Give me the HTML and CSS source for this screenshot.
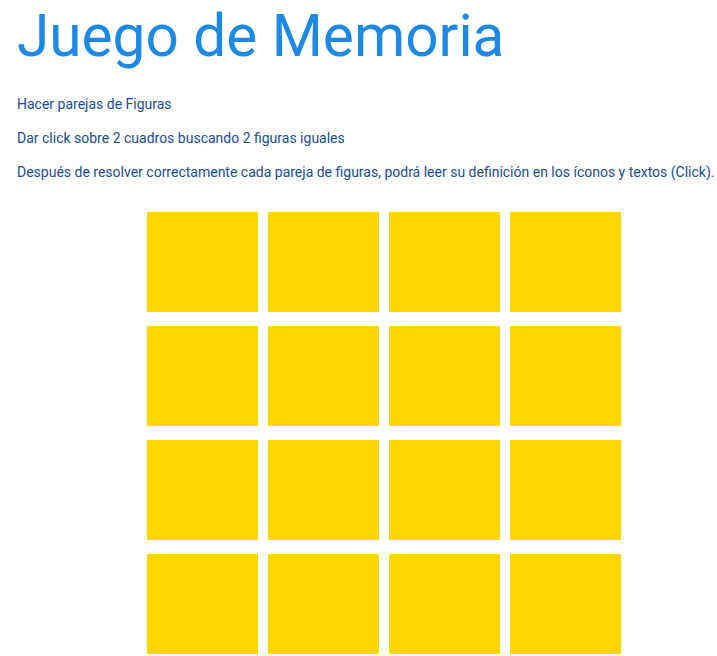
FILE: index.html
```html
<!DOCTYPE html>
<html lang="es">
<head>
<meta charset="utf-8">
<title>Juego de Memoria</title>
<link rel="stylesheet" href="styles.css">
</head>
<body>
<main class="page">
  <h1 class="title">Juego de Memoria</h1>
  <p class="info">Hacer parejas de Figuras</p>
  <p class="info">Dar click sobre 2 cuadros buscando 2 figuras iguales</p>
  <p class="info">Después de resolver correctamente cada pareja de figuras, podrá leer su definición en los íconos y textos (Click).</p>
  <div class="board">
    <div class="card"></div><div class="card"></div><div class="card"></div><div class="card"></div>
    <div class="card"></div><div class="card"></div><div class="card"></div><div class="card"></div>
    <div class="card"></div><div class="card"></div><div class="card"></div><div class="card"></div>
    <div class="card"></div><div class="card"></div><div class="card"></div><div class="card"></div>
  </div>
</main>
</body>
</html>
```

FILE: styles.css
```css
html, body {
  margin: 0;
  padding: 0;
  background: #ffffff;
}

.page {
  padding: 3px 0 0 17px;
  font-family: Roboto, "Liberation Sans", sans-serif;
}

.title {
  margin: 0 0 25px 0;
  font-size: 58.5px;
  line-height: 66px;
  font-weight: 400;
  color: #1e88e5;
}

.info {
  margin: 0 0 14px 0;
  font-size: 14px;
  line-height: 20px;
  color: #1a4c96;
}

.board {
  margin: 30px 0 0 130px;
  display: grid;
  grid-template-columns: repeat(4, 111px);
  grid-auto-rows: 100px;
  column-gap: 10px;
  row-gap: 14px;
}

.card {
  background: #ffd700;
}
```
